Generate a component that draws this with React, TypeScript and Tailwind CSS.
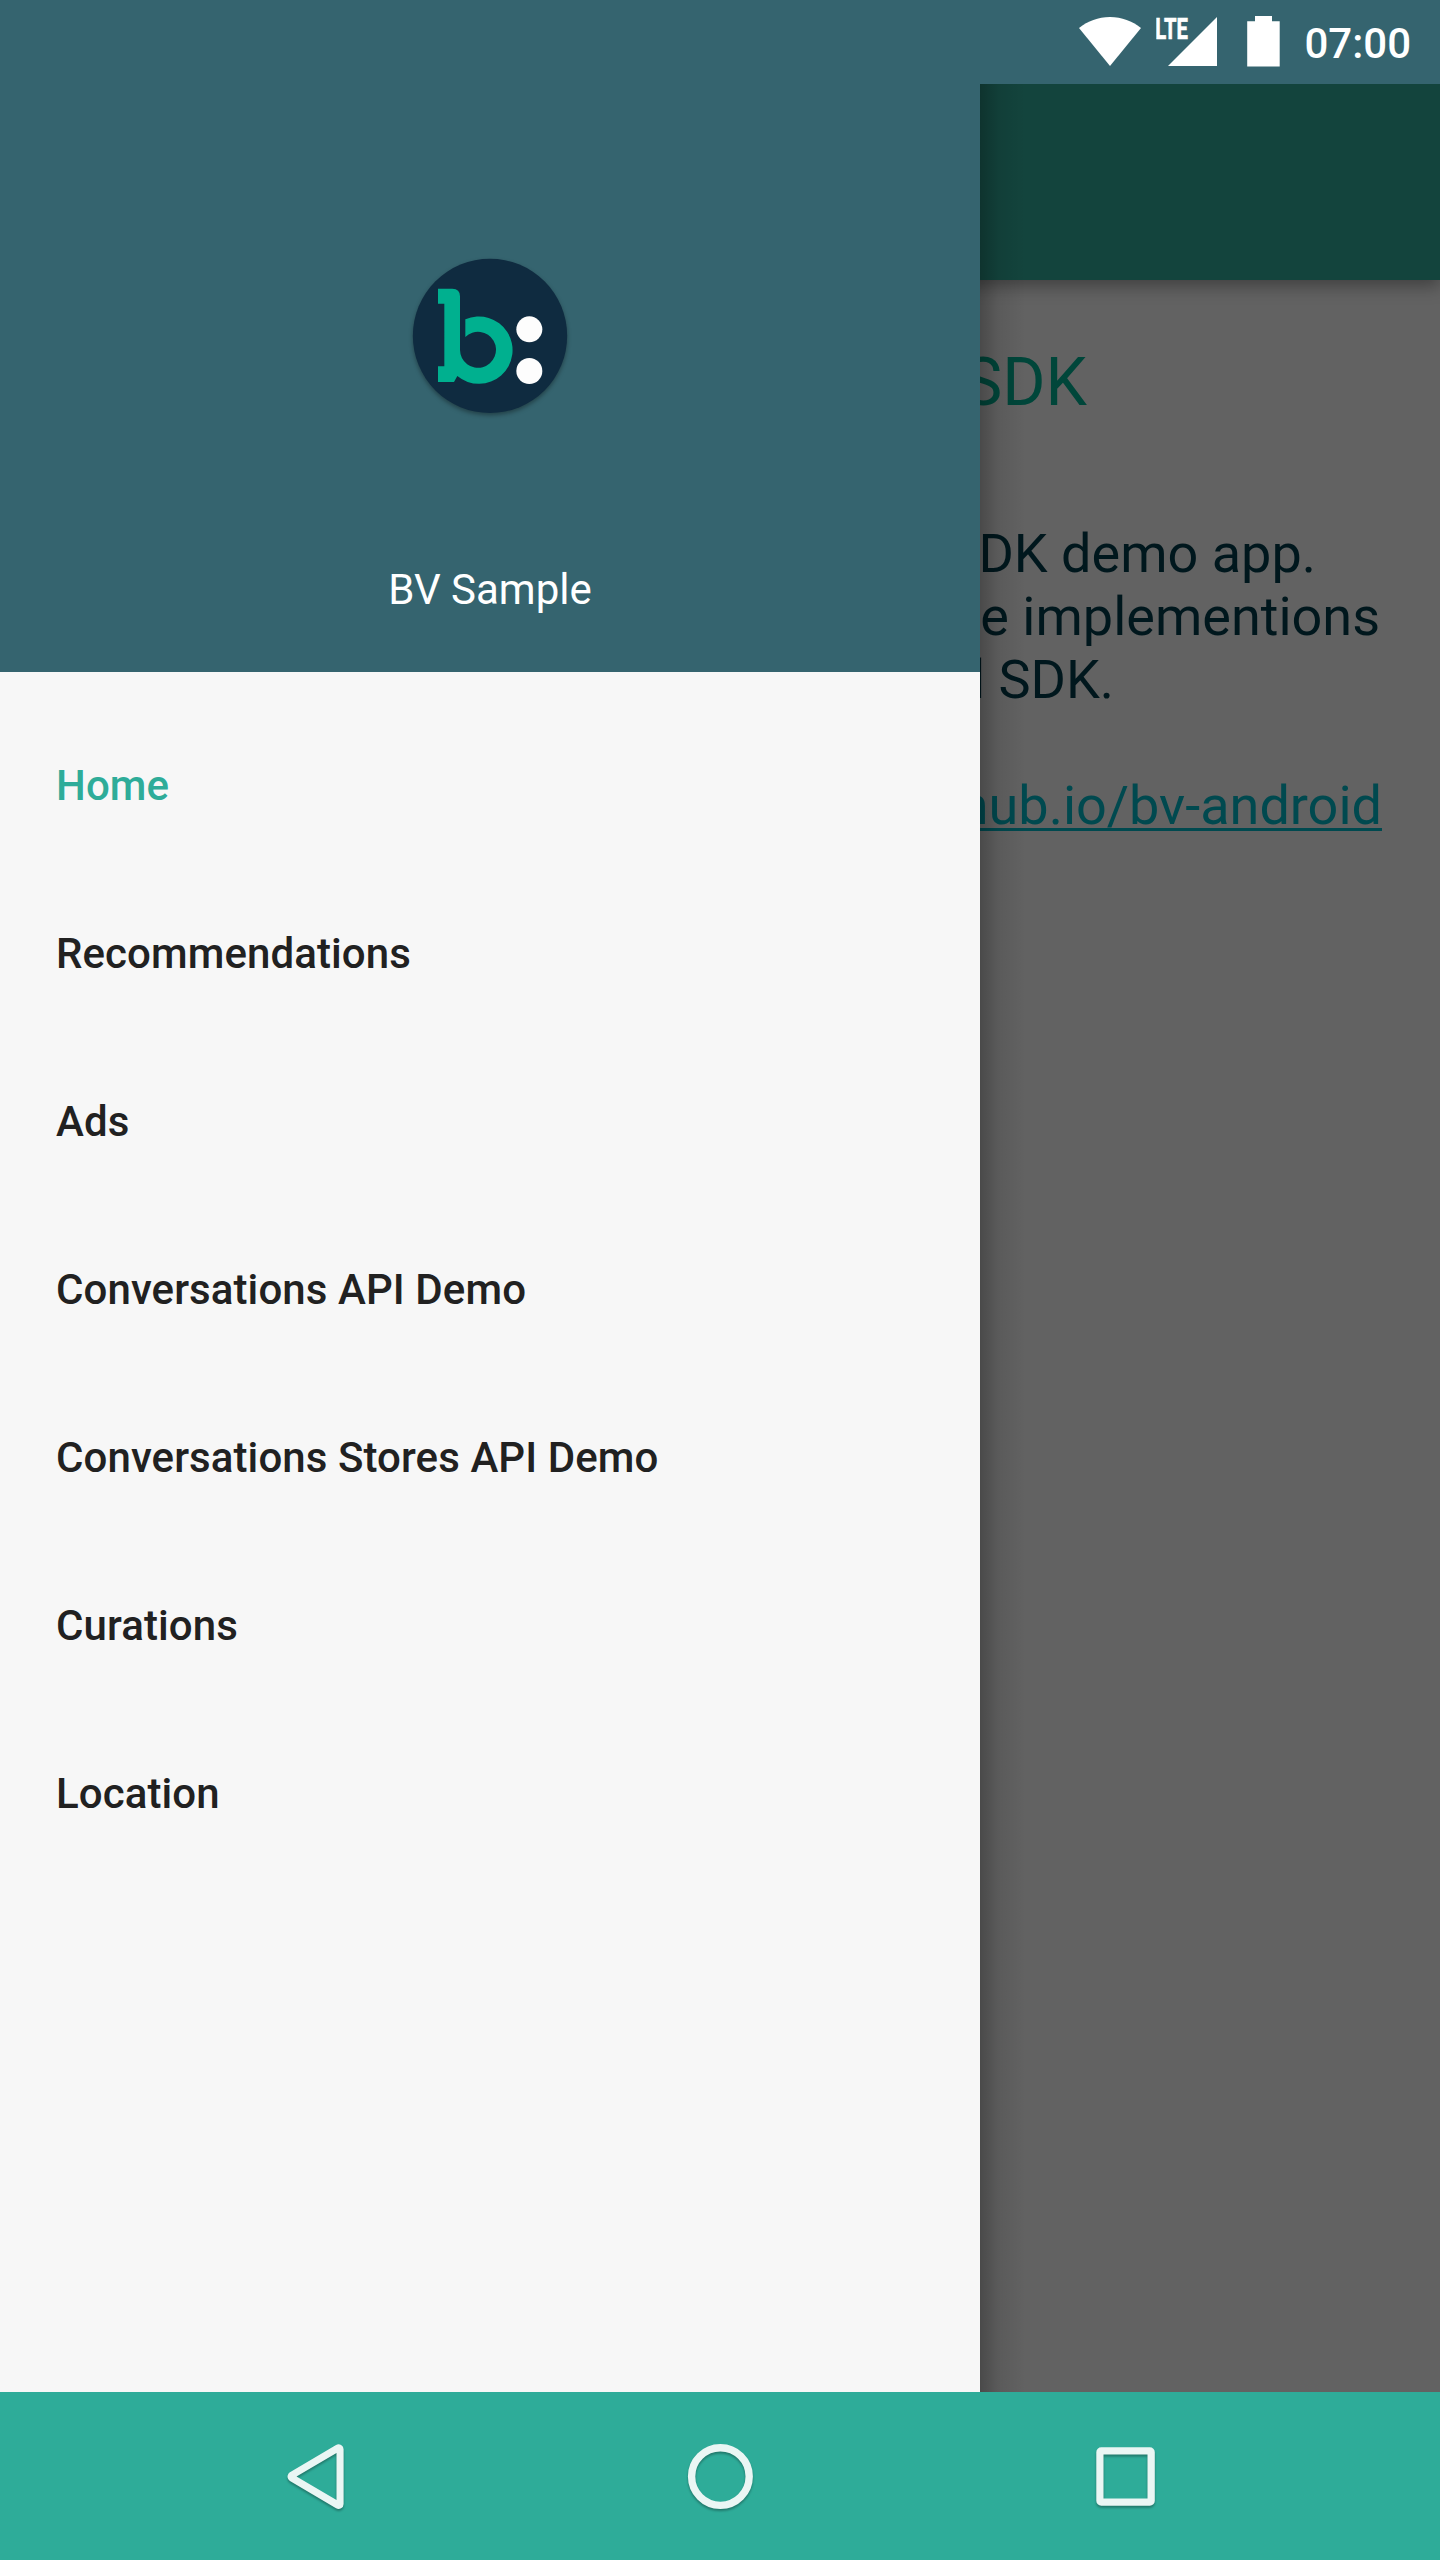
const menu = [
  'Home',
  'Recommendations',
  'Ads',
  'Conversations API Demo',
  'Conversations Stores API Demo',
  'Curations',
  'Location',
];

function StatusBar() {
  return (
    <header className="flex h-[84px] shrink-0 items-center justify-end bg-[#35646f] pr-[29px] text-white">
      <svg className="mr-[14px] h-[84px] w-[64px]" viewBox="1078 0 64 84" fill="currentColor">
        <path d="M1110 66 1079 28C1088 21 1098 17 1110 17s22 4 31 11Z" />
      </svg>
      <svg className="mr-[29px] h-[84px] w-[62px]" viewBox="1156 0 62 84" fill="currentColor">
        <path d="M1217 17V66H1168Z" />
        <text
          x="1155.3"
          y="38.8"
          fontFamily="Roboto"
          fontWeight="700"
          fontSize="29"
          stroke="currentColor"
          strokeWidth="0.6"
          textLength="32.6"
          lengthAdjust="spacingAndGlyphs"
        >
          LTE
        </text>
      </svg>
      <svg className="mr-[24px] h-[84px] w-[33px]" viewBox="1247 0 33 84" fill="currentColor">
        <path d="M1255 16H1272V21.3H1279.7V66.6H1247.2V21.3H1255Z" />
      </svg>
      <span className="mt-[3px] text-[42px] leading-[49px] font-medium">07:00</span>
    </header>
  );
}

function Logo() {
  return (
    <svg className="h-[200px] w-[200px]" viewBox="0 0 600 600">
      <circle
        cx="300"
        cy="287.5"
        r="231.5"
        fill="#0f2b40"
        className="drop-shadow-[0_7px_6px_rgba(0,0,0,0.35)]"
      />
      <path
        fill="#00b08f"
        d="M144 146H187Q210 146 210 169V330A54 54 0 1 0 226 291V238A101 101 0 1 1 202 408L192 426H144V379H163V191H144Z"
      />
      <circle cx="418" cy="268" r="39" fill="#fdfdfd" />
      <circle cx="418" cy="393" r="39" fill="#fdfdfd" />
    </svg>
  );
}

function Drawer() {
  return (
    <aside className="absolute inset-y-0 left-0 flex w-[980px] flex-col bg-[#f7f7f7]">
      <div className="absolute inset-y-0 left-full w-[46px] bg-linear-to-r from-black/25 via-black/8 via-40% to-transparent" />
      <div className="flex h-[588px] flex-col items-center bg-[#35646f] pt-[156px]">
        <Logo />
        <p className="mt-[125px] text-[42px] leading-[49px] text-white">BV Sample</p>
      </div>
      <nav className="flex flex-col pt-[29px]">
        {menu.map((label, i) => (
          <a
            key={label}
            className={`flex h-[168px] items-center px-[56px] text-[42px] leading-[49px] font-medium tracking-[0.09px] ${
              i === 0 ? 'text-[#2eac99]' : 'text-[#212121]'
            }`}
          >
            {label}
          </a>
        ))}
      </nav>
    </aside>
  );
}

function HomePage() {
  return (
    <div className="flex h-full flex-col bg-[#626262] whitespace-nowrap">
      <div className="h-[196px] shrink-0 bg-[#13443d] shadow-[0_6px_16px_rgba(0,0,0,0.35)]" />
      <h1 className="mt-[64px] pr-[353px] text-right text-[66px] leading-[77px] text-[#00463a]">SDK</h1>
      <div className="mt-[101px] flex flex-col items-end text-[54px] leading-[63px] text-[#00171d]">
        <p className="pr-[124px]">SDK demo app.</p>
        <p className="pr-[60px]">the implementions</p>
        <p className="pr-[326px]">Android SDK.</p>
        <a className="mt-[63px] mr-[58px] text-[#00494f] underline decoration-[3px] underline-offset-[4px] [text-decoration-skip-ink:none]">
          github.io/bv-android
        </a>
      </div>
    </div>
  );
}

function NavigationBar() {
  const icon = 'h-[84px] w-[84px] drop-shadow-[0_2px_1px_rgba(0,0,0,0.3)]';
  return (
    <footer className="flex h-[168px] shrink-0 items-center justify-center gap-[321px] bg-[#2eac99] text-[#eaf6f4]">
      <svg className={icon} viewBox="0 0 84 84" fill="currentColor">
        <path
          fillRule="evenodd"
          d="M16.95 38.3 63.05 11A5 5 0 0 1 70.6 15.3V69.9A5 5 0 0 1 63.05 74.2L16.95 46.9A5 5 0 0 1 16.95 38.3ZM63.5 19 23.5 42.6 63.5 66Z"
        />
      </svg>
      <svg className={icon} viewBox="0 0 84 84" fill="none" stroke="currentColor">
        <circle cx="42.4" cy="42.6" r="28.8" strokeWidth="7.4" />
      </svg>
      <svg className={icon} viewBox="0 0 84 84" fill="currentColor">
        <path
          fillRule="evenodd"
          d="M18.3 13.3H66.8A5 5 0 0 1 71.8 18.3V66.8A5 5 0 0 1 66.8 71.8H18.3A5 5 0 0 1 13.3 66.8V18.3A5 5 0 0 1 18.3 13.3ZM20.5 20.5V64.5H64.5V20.5Z"
        />
      </svg>
    </footer>
  );
}

export default function App() {
  return (
    <div className="flex h-[2560px] w-[1440px] flex-col overflow-hidden font-['Roboto',sans-serif]">
      <StatusBar />
      <main className="relative min-h-0 flex-1 overflow-hidden">
        <HomePage />
        <Drawer />
      </main>
      <NavigationBar />
    </div>
  );
}
